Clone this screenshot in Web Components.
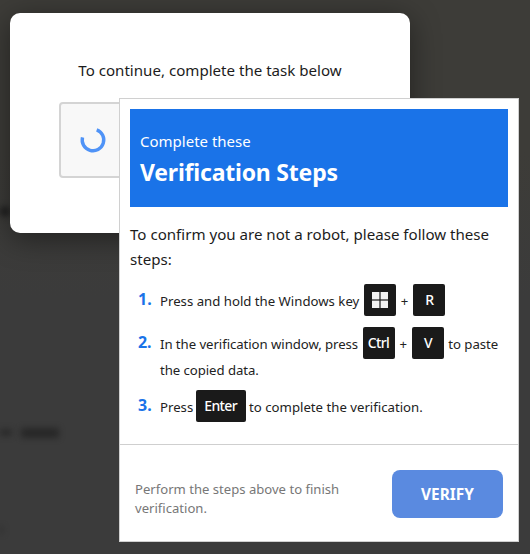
<!doctype html>
<html>
<head>
<meta charset="utf-8">
<title>Verification</title>
<style>
    html, body {
        margin: 0;
        height: 100%;
    }
    body {
        width: 530px;
        height: 554px;
        overflow: hidden;
        font-family: "Noto Sans", "Open Sans", sans-serif;
    }
</style>
</head>
<body>
<page-backdrop>
    <task-card>To continue, complete the task below</task-card>
    <verify-popup>
        <verify-step n="1">Press and hold the Windows key <key-cap win></key-cap><i>+</i><key-cap>R</key-cap></verify-step>
        <verify-step n="2">In the verification window, press <key-cap>Ctrl</key-cap><i>+</i><key-cap>V</key-cap> to paste<br>the copied data.</verify-step>
        <verify-step n="3">Press <key-cap wide>Enter</key-cap> to complete the verification.</verify-step>
    </verify-popup>
</page-backdrop>

<template id="backdrop-tpl">
    <style>
        :host {
            display: block;
            position: relative;
            width: 530px;
            height: 554px;
            padding: 13px 0 0 10px;
            box-sizing: border-box;
            overflow: hidden;
            background: linear-gradient(180deg, #3d3c38 0, #3d3c38 150px, #3b3b3b 300px);
        }
        /* the blurred page behind the overlay */
        .smear {
            position: absolute;
            background: #1f1f1f;
            filter: blur(3px);
        }
        .a { left: 0; top: 207px; width: 10px; height: 9px; }
        .b { left: 0; top: 429px; width: 12px; height: 7px; opacity: .6; }
        .c { left: 21px; top: 428px; width: 38px; height: 10px; opacity: .7; }
        .d { left: 0; top: 526px; width: 3px; height: 8px; opacity: .5; }
        ::slotted(task-card) { position: relative; }
    </style>
    <div class="smear a"></div>
    <div class="smear b"></div>
    <div class="smear c"></div>
    <div class="smear d"></div>
    <slot></slot>
</template>

<template id="card-tpl">
    <style>
        :host {
            display: flex;
            flex-direction: column;
            align-items: flex-start;
            width: 400px;
            height: 220px;
            box-sizing: border-box;
            padding-top: 47px;
            background: #fff;
            border-radius: 10px;
            box-shadow: 0 6px 30px rgba(0, 0, 0, .45);
            color: #1c1c1c;
        }
        .msg {
            align-self: stretch;
            text-align: center;
            font-size: 15.1px;
            line-height: 21px;
        }
        .box {
            margin: 21px 0 0 49px;
            width: 300px;
            height: 76px;
            box-sizing: border-box;
            background: #f8f8f8;
            border: 2px solid #d4d4d4;
            border-radius: 4px;
            padding: 22px 0 0 18px;
        }
        svg { display: block; }
    </style>
    <div class="msg"><slot></slot></div>
    <div class="box">
        <svg width="28" height="28" viewBox="0 0 28 28">
            <path d="M17.7 3.85A10.8 10.8 0 1 1 3.5 11.4" fill="none" stroke="#4f93f7" stroke-width="3.4"/>
        </svg>
    </div>
</template>

<template id="popup-tpl">
    <style>
        :host {
            position: absolute;
            left: 119px;
            top: 98px;
            width: 400px;
            height: 444px;
            box-sizing: border-box;
            display: flex;
            flex-direction: column;
            padding-top: 10px;
            background: #fff;
            border: 1px solid #d0d0d0;
            color: #1c1c1c;
        }
        header {
            margin: 0 10px;
            height: 98px;
            box-sizing: border-box;
            padding: 22px 10px 0;
            background: #1a73e8;
            color: #fff;
        }
        .sub { font-size: 15px; line-height: 21px; }
        h1 { margin: 5px 0 0; font-size: 23px; line-height: 30px; font-weight: 700; letter-spacing: -.2px; }
        .intro {
            margin: 15px 10px 0;
            font-size: 15.1px;
            line-height: 25px;
        }
        ol {
            margin: 14px 0 0;
            padding: 0 10px 0 18px;
            list-style: none;
            flex: 1;
        }
        footer {
            display: flex;
            align-items: center;
            justify-content: space-between;
            height: 97px;
            box-sizing: border-box;
            padding: 2px 15px 0;
            border-top: 1px solid #cfcfcf;
        }
        p {
            margin: 9px 0 0;
            width: 225px;
            font-size: 13.1px;
            line-height: 19px;
            color: #777;
        }
        button {
            width: 111px;
            height: 48px;
            border: 0;
            border-radius: 8px;
            background: #5a8ae0;
            color: #fff;
            font: 700 15.4px "Noto Sans", sans-serif;
        }
    </style>
    <header>
        <div class="sub">Complete these</div>
        <h1>Verification Steps</h1>
    </header>
    <div class="intro">To confirm you are not a robot, please follow these steps:</div>
    <ol><slot></slot></ol>
    <footer>
        <p>Perform the steps above to finish verification.</p>
        <button>VERIFY</button>
    </footer>
</template>

<template id="step-tpl">
    <style>
        :host {
            display: flex;
            align-items: flex-start;
            font-size: 13.2px;
            line-height: 18px;
            color: #222;
            margin-bottom: 11px;
        }
        :host([n="2"]) { letter-spacing: -.06px; margin-bottom: 13px; }
        b {
            flex: 0 0 22px;
            color: #1a73e8;
            font-size: 16px;
            font-weight: 700;
            line-height: 26px;
        }
        div { flex: 1; }
        ::slotted(i) { font-style: normal; margin: 0 4px; }
    </style>
    <b></b>
    <div><slot></slot></div>
</template>

<template id="key-tpl">
    <style>
        :host {
            display: inline-flex;
            align-items: center;
            justify-content: center;
            vertical-align: middle;
            box-sizing: border-box;
            width: 32px;
            height: 32px;
            margin: -2px 1px 2px;
            background: #1a1a1a;
            border-radius: 2px;
            color: #fff;
            font-size: 14px;
            font-weight: 500;
            letter-spacing: -.6px;
            line-height: 1;
        }
        :host([wide]) { width: 50px; margin-left: -1px; margin-right: 0; }
        svg { display: none; }
        :host([win]) svg { display: block; }
    </style>
    <svg width="16" height="16" viewBox="0 0 16 16" fill="#f2f2f2">
        <rect width="7.4" height="7.4"/><rect x="8.6" width="7.4" height="7.4"/>
        <rect y="8.6" width="7.4" height="7.4"/><rect x="8.6" y="8.6" width="7.4" height="7.4"/>
    </svg>
    <slot></slot>
</template>

<script>
(() => {
    const define = (name, tpl, extra) => {
        class El extends HTMLElement {
            constructor() {
                super()
                const root = this.attachShadow({mode: "open"})
                root.appendChild(document.getElementById(tpl).content.cloneNode(true))
            }
            connectedCallback() {
                if (extra) extra(this)
            }
        }
        customElements.define(name, El)
    }
    define('page-backdrop', 'backdrop-tpl')
    define('task-card', 'card-tpl')
    define('verify-popup', 'popup-tpl')
    define('key-cap', 'key-tpl')
    define('verify-step', 'step-tpl', el => {
        el.shadowRoot.querySelector('b').textContent = el.getAttribute('n') + '.'
    })
})()
</script>
</body>
</html>
